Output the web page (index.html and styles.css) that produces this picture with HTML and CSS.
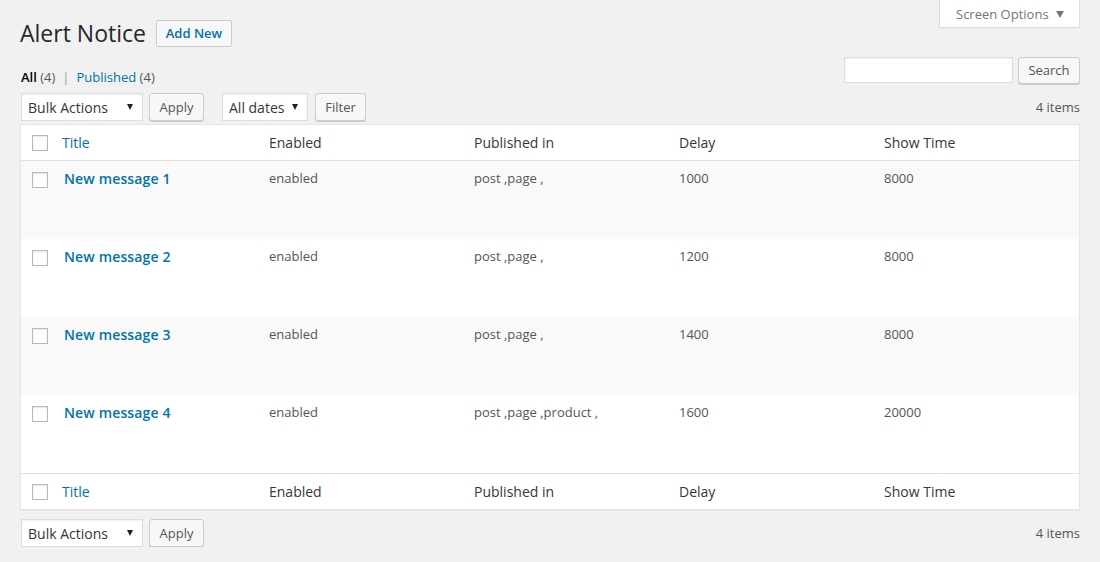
FILE: index.html
```html
<!DOCTYPE html>
<html lang="en">
<head>
<meta charset="utf-8">
<title>Alert Notice</title>
<link rel="stylesheet" href="styles.css">
</head>
<body>
<div class="screen-meta-links">
  <button class="screen-options">Screen Options <span class="tri"></span></button>
</div>
<div class="wrap">
  <div class="heading">
    <h1>Alert Notice</h1>
    <a class="add-new" href="#">Add New</a>
  </div>
  <div class="subrow">
    <ul class="subsubsub">
      <li><a class="current" href="#">All <span class="count">(4)</span></a><span class="sep">|</span></li>
      <li><a href="#">Published <span class="count">(4)</span></a></li>
    </ul>
    <div class="search-box">
      <input class="search-input" type="search">
      <button class="button search-btn">Search</button>
    </div>
  </div>

  <div class="tablenav top">
    <span class="select-wrap bulk"><select class="select"><option>Bulk Actions</option></select></span>
    <button class="button apply">Apply</button>
    <span class="select-wrap dates"><select class="select"><option>All dates</option></select></span>
    <button class="button filter">Filter</button>
    <span class="num">4 items</span>
  </div>

  <table class="list-table">
    <colgroup>
      <col class="c-check"><col class="c-title"><col class="c-col"><col class="c-col"><col class="c-col"><col class="c-col">
    </colgroup>
    <thead>
      <tr>
        <th class="check"><input type="checkbox" class="cb"></th>
        <th><a href="#">Title</a></th>
        <th>Enabled</th>
        <th>Published in</th>
        <th>Delay</th>
        <th>Show Time</th>
      </tr>
    </thead>
    <tbody>
      <tr>
        <td class="check"><input type="checkbox" class="cb"></td>
        <td class="title"><a href="#">New message 1</a></td>
        <td>enabled</td><td>post ,page ,</td><td>1000</td><td>8000</td>
      </tr>
      <tr>
        <td class="check"><input type="checkbox" class="cb"></td>
        <td class="title"><a href="#">New message 2</a></td>
        <td>enabled</td><td>post ,page ,</td><td>1200</td><td>8000</td>
      </tr>
      <tr>
        <td class="check"><input type="checkbox" class="cb"></td>
        <td class="title"><a href="#">New message 3</a></td>
        <td>enabled</td><td>post ,page ,</td><td>1400</td><td>8000</td>
      </tr>
      <tr>
        <td class="check"><input type="checkbox" class="cb"></td>
        <td class="title"><a href="#">New message 4</a></td>
        <td>enabled</td><td>post ,page ,product ,</td><td>1600</td><td>20000</td>
      </tr>
    </tbody>
    <tfoot>
      <tr>
        <th class="check"><input type="checkbox" class="cb"></th>
        <th><a href="#">Title</a></th>
        <th>Enabled</th>
        <th>Published in</th>
        <th>Delay</th>
        <th>Show Time</th>
      </tr>
    </tfoot>
  </table>

  <div class="tablenav bottom">
    <span class="select-wrap bulk"><select class="select"><option>Bulk Actions</option></select></span>
    <button class="button apply">Apply</button>
    <span class="num">4 items</span>
  </div>
</div>
</body>
</html>
```

FILE: styles.css
```css
* { box-sizing: border-box; }

html, body {
  margin: 0;
  padding: 0;
  background: #f1f1f1;
  font-family: "Open Sans", "Liberation Sans", sans-serif;
  font-size: 13px;
  color: #444;
}

a { color: #0073aa; text-decoration: none; }

.screen-meta-links {
  float: right;
  margin-right: 20px;
}

.screen-options {
  width: 141px;
  height: 28px;
  margin: 0;
  padding: 0 0 0 16px;
  background: #fff;
  border: 1px solid #ddd;
  border-top: none;
  box-shadow: 0 1px 1px -1px rgba(0,0,0,.1);
  font-family: inherit;
  font-size: 13px;
  color: #72777c;
  text-align: left;
  display: flex;
  align-items: center;
  gap: 7px;
}

.tri {
  display: inline-block;
  width: 0;
  height: 0;
  border-left: 4px solid transparent;
  border-right: 4px solid transparent;
  border-top: 7px solid #72777c;
  margin-top: 1px;
}

.wrap {
  padding: 0 20px;
}

.heading {
  display: flex;
  align-items: center;
  gap: 10px;
  padding-top: 19px;
}

.heading h1 {
  margin: 0;
  font-size: 23px;
  line-height: 29px;
  font-weight: 400;
  color: #23282d;
}

.add-new {
  display: inline-block;
  width: 76px;
  height: 27px;
  padding: 0;
  text-align: center;
  line-height: 25px;
  border: 1px solid #ccc;
  border-radius: 2px;
  background: #f7f7f7;
  font-size: 13px;
  font-weight: 600;
  color: #0073aa;
}

.subrow {
  display: flex;
  justify-content: space-between;
  align-items: flex-start;
  margin-top: 9px;
}

.subsubsub {
  list-style: none;
  margin: 10px 0 0 1px;
  padding: 0;
  display: flex;
  font-size: 13px;
  line-height: 20px;
  color: #555;
}

.subsubsub a { color: #0073aa; }
.subsubsub a.current { color: #000; font-weight: 600; }
.subsubsub .count { color: #555; font-weight: 400; }
.subsubsub .sep { color: #999; margin: 0 7px; }

.search-box {
  display: flex;
  gap: 5px;
}

.search-input {
  width: 169px;
  height: 26px;
  margin: 0;
  border: 1px solid #ddd;
  box-shadow: inset 0 1px 2px rgba(0,0,0,.07);
  background: #fff;
  font-family: inherit;
}

.button {
  height: 27px;
  margin: 0;
  padding: 0 10px;
  border: 1px solid #ccc;
  border-radius: 3px;
  background: #f7f7f7;
  box-shadow: 0 1px 0 #ccc;
  font-family: inherit;
  font-size: 13px;
  line-height: 25px;
  color: #555;
}

.search-btn { width: 62px; padding: 0; }

.tablenav {
  display: flex;
  align-items: flex-start;
  height: 28px;
  padding-left: 1px;
}

.tablenav.top { margin-top: 6px; }
.tablenav.bottom { margin-top: 9px; }

.tablenav .button { margin-left: 6px; height: 28px; line-height: 26px; padding: 0; }
.tablenav .apply { width: 55px; margin-right: 18px; }
.tablenav .filter { width: 51px; margin-left: 7px; }

.select-wrap {
  position: relative;
  display: inline-block;
}

.select-wrap::after {
  content: "";
  position: absolute;
  top: 11px;
  right: 10px;
  border-left: 3.5px solid transparent;
  border-right: 3.5px solid transparent;
  border-top: 6px solid #222;
  pointer-events: none;
}

.select {
  -webkit-appearance: none;
  appearance: none;
  display: block;
  height: 28px;
  margin: 0;
  padding: 0 0 0 6px;
  border: 1px solid #ddd;
  border-radius: 0;
  background: #fff;
  box-shadow: inset 0 1px 2px rgba(0,0,0,.07);
  font-family: inherit;
  font-size: 14px;
  color: #32373c;
}

.bulk .select { width: 122px; }
.dates .select { width: 86px; }

.num {
  margin-left: auto;
  line-height: 28px;
  font-size: 13px;
  color: #555;
}

.list-table {
  width: 100%;
  margin-top: 3px;
  border: 1px solid #e5e5e5;
  border-spacing: 0;
  border-collapse: separate;
  table-layout: fixed;
  background: #fff;
  box-shadow: 0 1px 1px rgba(0,0,0,.04);
}

.c-check { width: 31px; }
.c-title { width: 207px; }
.c-col { width: 205px; }

.list-table th {
  height: 35px;
  padding: 0 10px;
  text-align: left;
  font-weight: 400;
  font-size: 14px;
  color: #32373c;
  vertical-align: middle;
}

.list-table thead th { border-bottom: 1px solid #e1e1e1; height: 36px; }
.list-table tfoot th { border-top: 1px solid #e1e1e1; height: 36px; }

.list-table th.check,
.list-table td.check {
  padding: 0 0 0 11px;
}

.list-table th.check .cb { display: block; margin-top: 1px; }

.list-table td.check { padding-top: 11px; }

.list-table td {
  height: 78px;
  padding: 8px 10px;
  vertical-align: top;
  font-size: 13px;
  line-height: 19.5px;
  color: #555;
}

.list-table tbody tr:nth-child(odd) td { background: #f9f9f9; }

.list-table td.title {
  padding-left: 12px;
}

.list-table td.title a {
  font-size: 14px;
  font-weight: 600;
  letter-spacing: 0.15px;
}

.cb {
  -webkit-appearance: none;
  appearance: none;
  display: block;
  width: 16px;
  height: 16px;
  margin: 0;
  border: 1px solid #b4b9be;
  background: #fff;
  box-shadow: inset 0 1px 2px rgba(0,0,0,.1);
  border-radius: 0;
}
```
